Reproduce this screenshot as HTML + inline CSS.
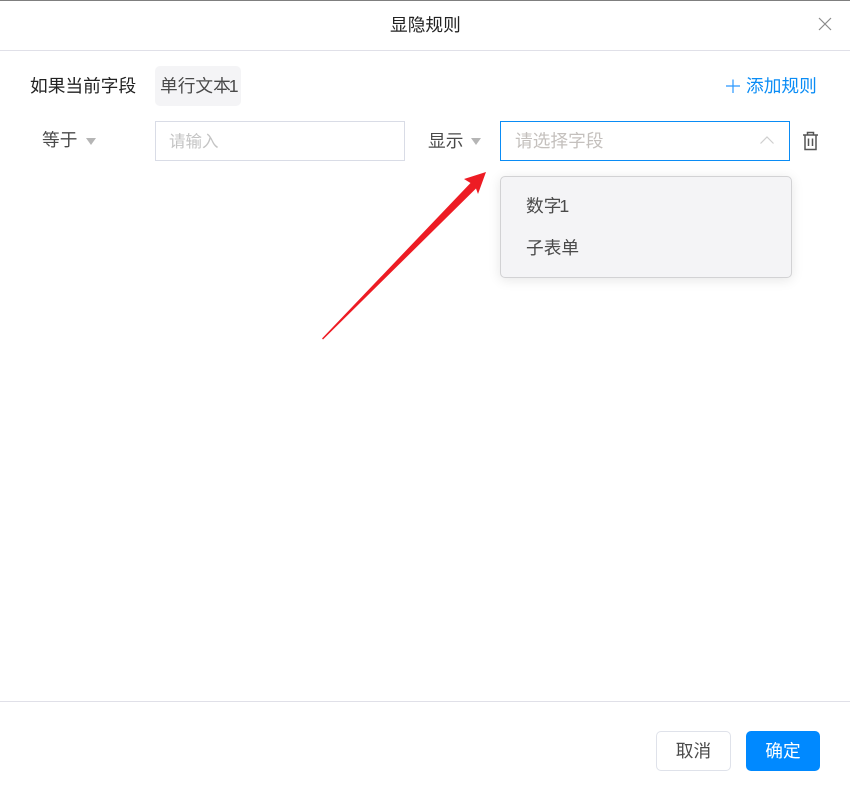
<!DOCTYPE html>
<html lang="zh">
<head>
<meta charset="utf-8">
<style>
html,body{margin:0;padding:0;background:#fff}
body{width:850px;height:797px;position:relative;overflow:hidden;font-family:"Liberation Sans","Noto Sans CJK SC",sans-serif;font-size:17.7px;color:#4a4a4a}
.a{position:absolute;white-space:nowrap}
.t{line-height:24px;height:24px}
.n{margin-left:-2px}
.tri{position:absolute;width:0;height:0;border-left:5.500px solid transparent;border-right:5.500px solid transparent;border-top:7px solid #b5b5b5}
</style>
</head>
<body>
<div class="a" style="left:0;top:0;width:850px;height:1px;background:#7f7f7f"></div>
<div class="a t" style="left:390px;top:13px;color:#222">显隐规则</div>
<svg class="a" style="left:817px;top:16px" width="16" height="16" viewBox="0 0 16 16"><path d="M2 2L14 14M14 2L2 14" stroke="#8a8a8a" stroke-width="1.2" fill="none"/></svg>
<div class="a" style="left:0;top:50px;width:850px;height:1px;background:#e0e0e8"></div>

<div class="a t" style="left:30px;top:74px;color:#222">如果当前字段</div>
<div class="a" style="left:155px;top:66px;width:86px;height:40px;background:#f4f4f6;border-radius:5px"></div>
<div class="a t" style="left:160px;top:74px">单行文本<span class="n">1</span></div>
<svg class="a" style="left:725px;top:78px" width="16" height="16" viewBox="0 0 16 16"><path d="M1 8H15M8 1.500V15" stroke="#2a98ff" stroke-width="1.2" fill="none"/></svg>
<div class="a t" style="left:746px;top:74px;color:#0a8cf5">添加规则</div>

<div class="a t" style="left:42px;top:128px">等于</div>
<div class="tri" style="left:86px;top:138px"></div>
<div class="a" style="left:155px;top:121px;width:248px;height:38px;border:1px solid #d9dce6"></div>
<div class="a" style="left:169px;top:130px;font-size:16.500px;line-height:24px;color:#c4c4c4">请输入</div>

<div class="a t" style="left:428px;top:129px">显示</div>
<div class="tri" style="left:471px;top:138px"></div>
<div class="a" style="left:500px;top:121px;width:288px;height:38px;border:1px solid #0a8cf5"></div>
<div class="a t" style="left:515px;top:129px;color:#c4c0bd">请选择字段</div>
<svg class="a" style="left:759px;top:134px" width="16" height="12" viewBox="0 0 16 12"><path d="M1.500 9.500L8 3L14.500 9.500" stroke="#cfcfcf" stroke-width="1.2" fill="none"/></svg>
<svg class="a" style="left:801px;top:131px" width="19" height="20" viewBox="0 0 19 20"><path d="M2 4H17M6.500 4V1.500H12.500V4M4 4V18.500H15V4M7.500 7.500V15M11.500 7.500V15" stroke="#555" stroke-width="1.500" fill="none"/></svg>

<div class="a" style="left:500px;top:176px;width:290px;height:100px;background:#f4f4f6;border:1px solid #d2d2d4;border-radius:5px;box-shadow:0 2px 12px rgba(0,0,0,.1)"></div>
<div class="a t" style="left:526px;top:194px">数字<span class="n">1</span></div>
<div class="a t" style="left:526px;top:236px">子表单</div>

<svg class="a" style="left:0;top:0" width="850" height="797" viewBox="0 0 850 797"><polygon points="322,338.500 470.500,183 464,179 486,172 478,194 476,188.500 323,339.500" fill="#ed1c24"/></svg>

<div class="a" style="left:0;top:701px;width:850px;height:1px;background:#e0e0e8"></div>
<div class="a" style="left:656px;top:731px;width:73px;height:38px;border:1px solid #dfe2ea;border-radius:5px;background:#fff;text-align:center;line-height:38px">取消</div>
<div class="a" style="left:746px;top:731px;width:74px;height:40px;border-radius:5px;background:#0089ff;color:#fff;text-align:center;line-height:40px">确定</div>
</body>
</html>
